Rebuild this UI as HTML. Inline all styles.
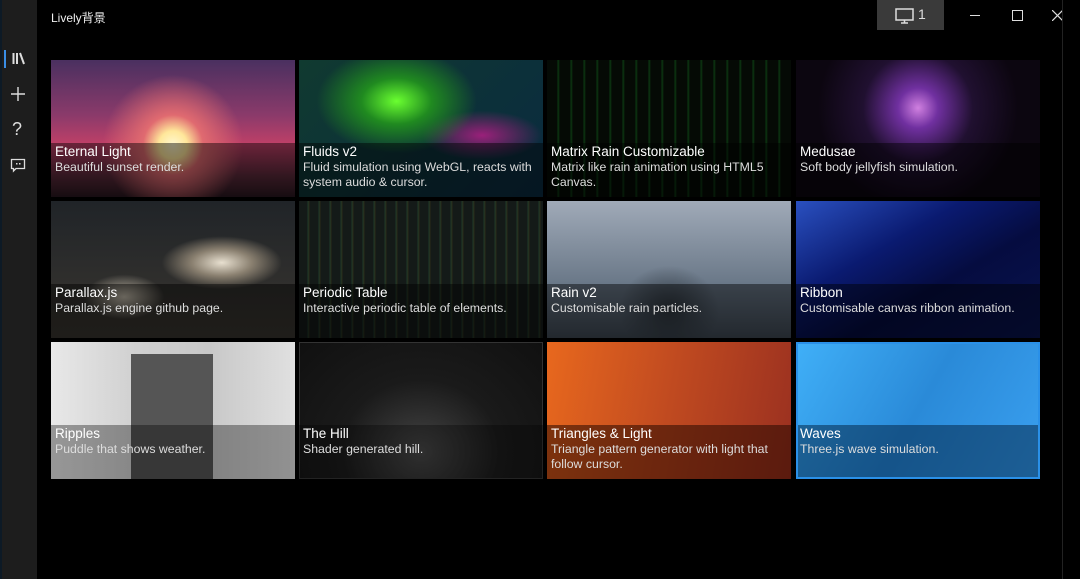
<!DOCTYPE html><html><head><meta charset="utf-8"><style>
body{margin:0;width:1080px;height:579px;background:#000;overflow:hidden;position:relative;font-family:"Segoe UI","Liberation Sans","Noto Sans CJK SC",sans-serif;color:#fff}
.side{position:absolute;left:2px;top:0;width:35px;height:579px;background:#1d1d1d}
.edge{position:absolute;left:0;top:0;width:2px;height:579px;background:#0d1a26}
.title{position:absolute;left:51px;top:9px;font-size:12px;color:#eee}
.t{position:absolute;width:244px;height:137px;overflow:hidden}
.cap{position:absolute;left:0;right:0;top:83px;bottom:0;background:rgba(0,0,0,.45);padding:1px 4px}
.cap b{display:block;font-weight:normal;font-size:13.5px;line-height:16px;margin-top:0}
.cap span{display:block;font-size:12.3px;line-height:15px;color:#ddd}
.ic{position:absolute;color:#ddd}
</style></head><body>
<div class="edge"></div><div class="side"></div>
<div style="position:absolute;left:4px;top:50px;width:2px;height:18px;background:#3a8ee6"></div>
<svg class="ic" style="left:12px;top:52px" width="14" height="13"><path d="M1.5 1V12M5 1V12M8 1L12 12" stroke="#ddd" stroke-width="2"/></svg>
<svg class="ic" style="left:10px;top:86px" width="16" height="16"><path d="M8 1V15M1 8H15" stroke="#ddd" stroke-width="1.4"/></svg>
<div class="ic" style="left:12px;top:119px;font-size:18px">?</div>
<svg class="ic" style="left:10px;top:158px" width="16" height="15"><path d="M1.5 1.5H14.5V10.5H6L3.5 13V10.5H1.5Z" fill="none" stroke="#ddd" stroke-width="1.3"/><rect x="6" y="5" width="1.5" height="1.5" fill="#ddd"/><rect x="9" y="5" width="1.5" height="1.5" fill="#ddd"/></svg>
<div class="title">Lively背景</div>
<div style="position:absolute;left:877px;top:0;width:67px;height:30px;background:#3a3a3a"></div>
<svg style="position:absolute;left:895px;top:8px" width="20" height="16"><rect x="1" y="1" width="17" height="11" fill="none" stroke="#ddd" stroke-width="1.5"/><path d="M6 15H13M9.5 12V15" stroke="#ddd" stroke-width="1.5"/></svg>
<div style="position:absolute;left:918px;top:6px;font-size:14px;color:#ddd">1</div>
<div style="position:absolute;left:970px;top:15px;width:10px;height:1px;background:#ddd"></div>
<div style="position:absolute;left:1012px;top:10px;width:9px;height:9px;border:1px solid #ddd"></div>
<svg style="position:absolute;left:1052px;top:10px" width="11" height="11"><path d="M0 0L11 11M11 0L0 11" stroke="#ddd" stroke-width="1.2"/></svg>
<div style="position:absolute;left:1062px;top:0;width:1px;height:579px;background:#222"></div>

<div class="t" style="left:51px;top:60px;background:radial-gradient(circle at 50% 62%,#fff8d0 0,#ffe79a 14px,#e06a70 30px,transparent 70px),linear-gradient(#4a3060,#8a3a6a 40%,#c04068 62%,#5a2a3a 85%,#2a1820)"><div class="cap"><b>Eternal Light</b><span>Beautiful sunset render.</span></div></div>
<div class="t" style="left:299px;top:60px;background:radial-gradient(ellipse at 40% 30%,#6aff30 0,#208a20 35px,transparent 80px),radial-gradient(ellipse at 75% 55%,#9a207a,transparent 60px),linear-gradient(135deg,#103a30,#0a2a40)"><div class="cap"><b>Fluids v2</b><span>Fluid simulation using WebGL, reacts with system audio &amp; cursor.</span></div></div>
<div class="t" style="left:547px;top:60px;background:repeating-linear-gradient(90deg,#050a05 0,#050a05 10px,#0c3a12 11px,#050a05 13px)"><div class="cap"><b>Matrix Rain Customizable</b><span>Matrix like rain animation using HTML5 Canvas.</span></div></div>
<div class="t" style="left:796px;top:60px;background:radial-gradient(circle at 50% 35%,#d080e0 0,#7030a0 20px,#201030 55px,#0c0610 100px)"><div class="cap"><b>Medusae</b><span>Soft body jellyfish simulation.</span></div></div>

<div class="t" style="left:51px;top:201px;background:radial-gradient(ellipse at 70% 45%,#e8e0d0 0,#8a8070 30px,transparent 60px),radial-gradient(ellipse at 30% 70%,#c0b8a8 0,transparent 40px),linear-gradient(#202428,#3a3630)"><div class="cap"><b>Parallax.js</b><span>Parallax.js engine github page.</span></div></div>
<div class="t" style="left:299px;top:201px;background:repeating-linear-gradient(90deg,#141a18 0,#141a18 8px,#1e3a2a 9px,#2a2a18 10px,#141a18 11px),#111"><div class="cap"><b>Periodic Table</b><span>Interactive periodic table of elements.</span></div></div>
<div class="t" style="left:547px;top:201px;background:radial-gradient(ellipse at 50% 80%,#303840 0,transparent 50px),linear-gradient(#a0aab8,#6a7888 60%,#404a55)"><div class="cap"><b>Rain v2</b><span>Customisable rain particles.</span></div></div>
<div class="t" style="left:796px;top:201px;background:linear-gradient(150deg,#2a50c0 0,#0a1a70 35%,#050c40 60%,#0a1450)"><div class="cap"><b>Ribbon</b><span>Customisable canvas ribbon animation.</span></div></div>

<div class="t" style="left:51px;top:342px;background:linear-gradient(90deg,#e8e8e8,#d0d0d0 35%,#c8c8c8 65%,#e0e0e0)"><div style="position:absolute;left:80px;top:12px;width:82px;height:125px;background:#555"></div><div class="cap" style="background:rgba(0,0,0,.35)"><b>Ripples</b><span>Puddle that shows weather.</span></div></div>
<div class="t" style="left:299px;top:342px;background:radial-gradient(ellipse at 50% 80%,#444 0,#1a1a1a 80px,#101010);outline:1px solid #333;outline-offset:-1px"><div class="cap" style="background:rgba(0,0,0,.3)"><b>The Hill</b><span>Shader generated hill.</span></div></div>
<div class="t" style="left:547px;top:342px;background:linear-gradient(100deg,#e8681e,#c04a20 50%,#9a3020)"><div class="cap" style="background:rgba(40,10,0,.55)"><b>Triangles &amp; Light</b><span>Triangle pattern generator with light that follow cursor.</span></div></div>
<div class="t" style="left:796px;top:342px;background:linear-gradient(120deg,#40b0f8,#2a8ad8 50%,#3aa0f0);box-shadow:inset 0 0 0 2px #2a90e8"><div class="cap" style="background:rgba(0,30,60,.5);left:2px;right:2px;bottom:2px;padding-left:2px"><b>Waves</b><span>Three.js wave simulation.</span></div></div>
</body></html>
